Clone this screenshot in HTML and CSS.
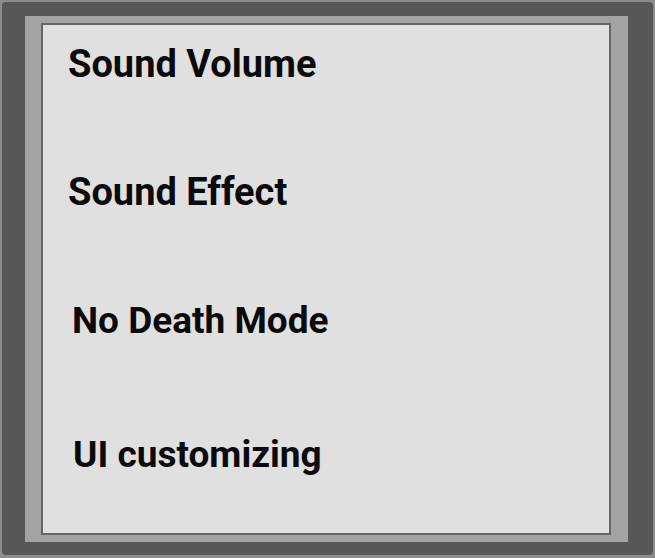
FILE: index.html
```html
<!DOCTYPE html>
<html>
<head>
<meta charset="utf-8">
<link rel="stylesheet" href="styles.css">
</head>
<body>
<div class="frame">
  <div class="mat">
    <div class="panel">
      <ul class="options">
        <li class="option">Sound Volume</li>
        <li class="option">Sound Effect</li>
        <li class="option option--indent option--wide">No Death Mode</li>
        <li class="option option--indent">UI customizing</li>
      </ul>
    </div>
  </div>
</div>
</body>
</html>
```

FILE: styles.css
```css
html, body {
  margin: 0;
  padding: 0;
}
body {
  width: 655px;
  height: 558px;
  background: #8c8c8c;
  padding: 2px;
  box-sizing: border-box;
}
.frame {
  width: 651px;
  height: 553px;
  box-sizing: border-box;
  background: #575757;
  border-radius: 4px;
  padding: 14px 25px 13px 23px;
}
.mat {
  height: 100%;
  box-sizing: border-box;
  background: #a3a3a3;
  padding: 7px 17px 7px 16px;
}
.panel {
  height: 100%;
  box-sizing: border-box;
  background: #e0e0e0;
  border: 2px solid #666;
}
.options {
  list-style: none;
  margin: 0;
  padding: 17px 0 0 25px;
  display: flex;
  flex-direction: column;
  gap: 84px;
}
.option {
  font-family: Roboto, "Liberation Sans", sans-serif;
  font-weight: 700;
  font-size: 38px;
  line-height: 44px;
  color: #0a0a0a;
  height: 44px;
  white-space: nowrap;
}
.option--indent {
  margin-left: 4px;
  font-size: 37px;
}
.option--wide {
  margin-top: 1px;
  margin-bottom: 6px;
}
.option + .option--indent:last-child {
  margin-left: 5px;
}
```
